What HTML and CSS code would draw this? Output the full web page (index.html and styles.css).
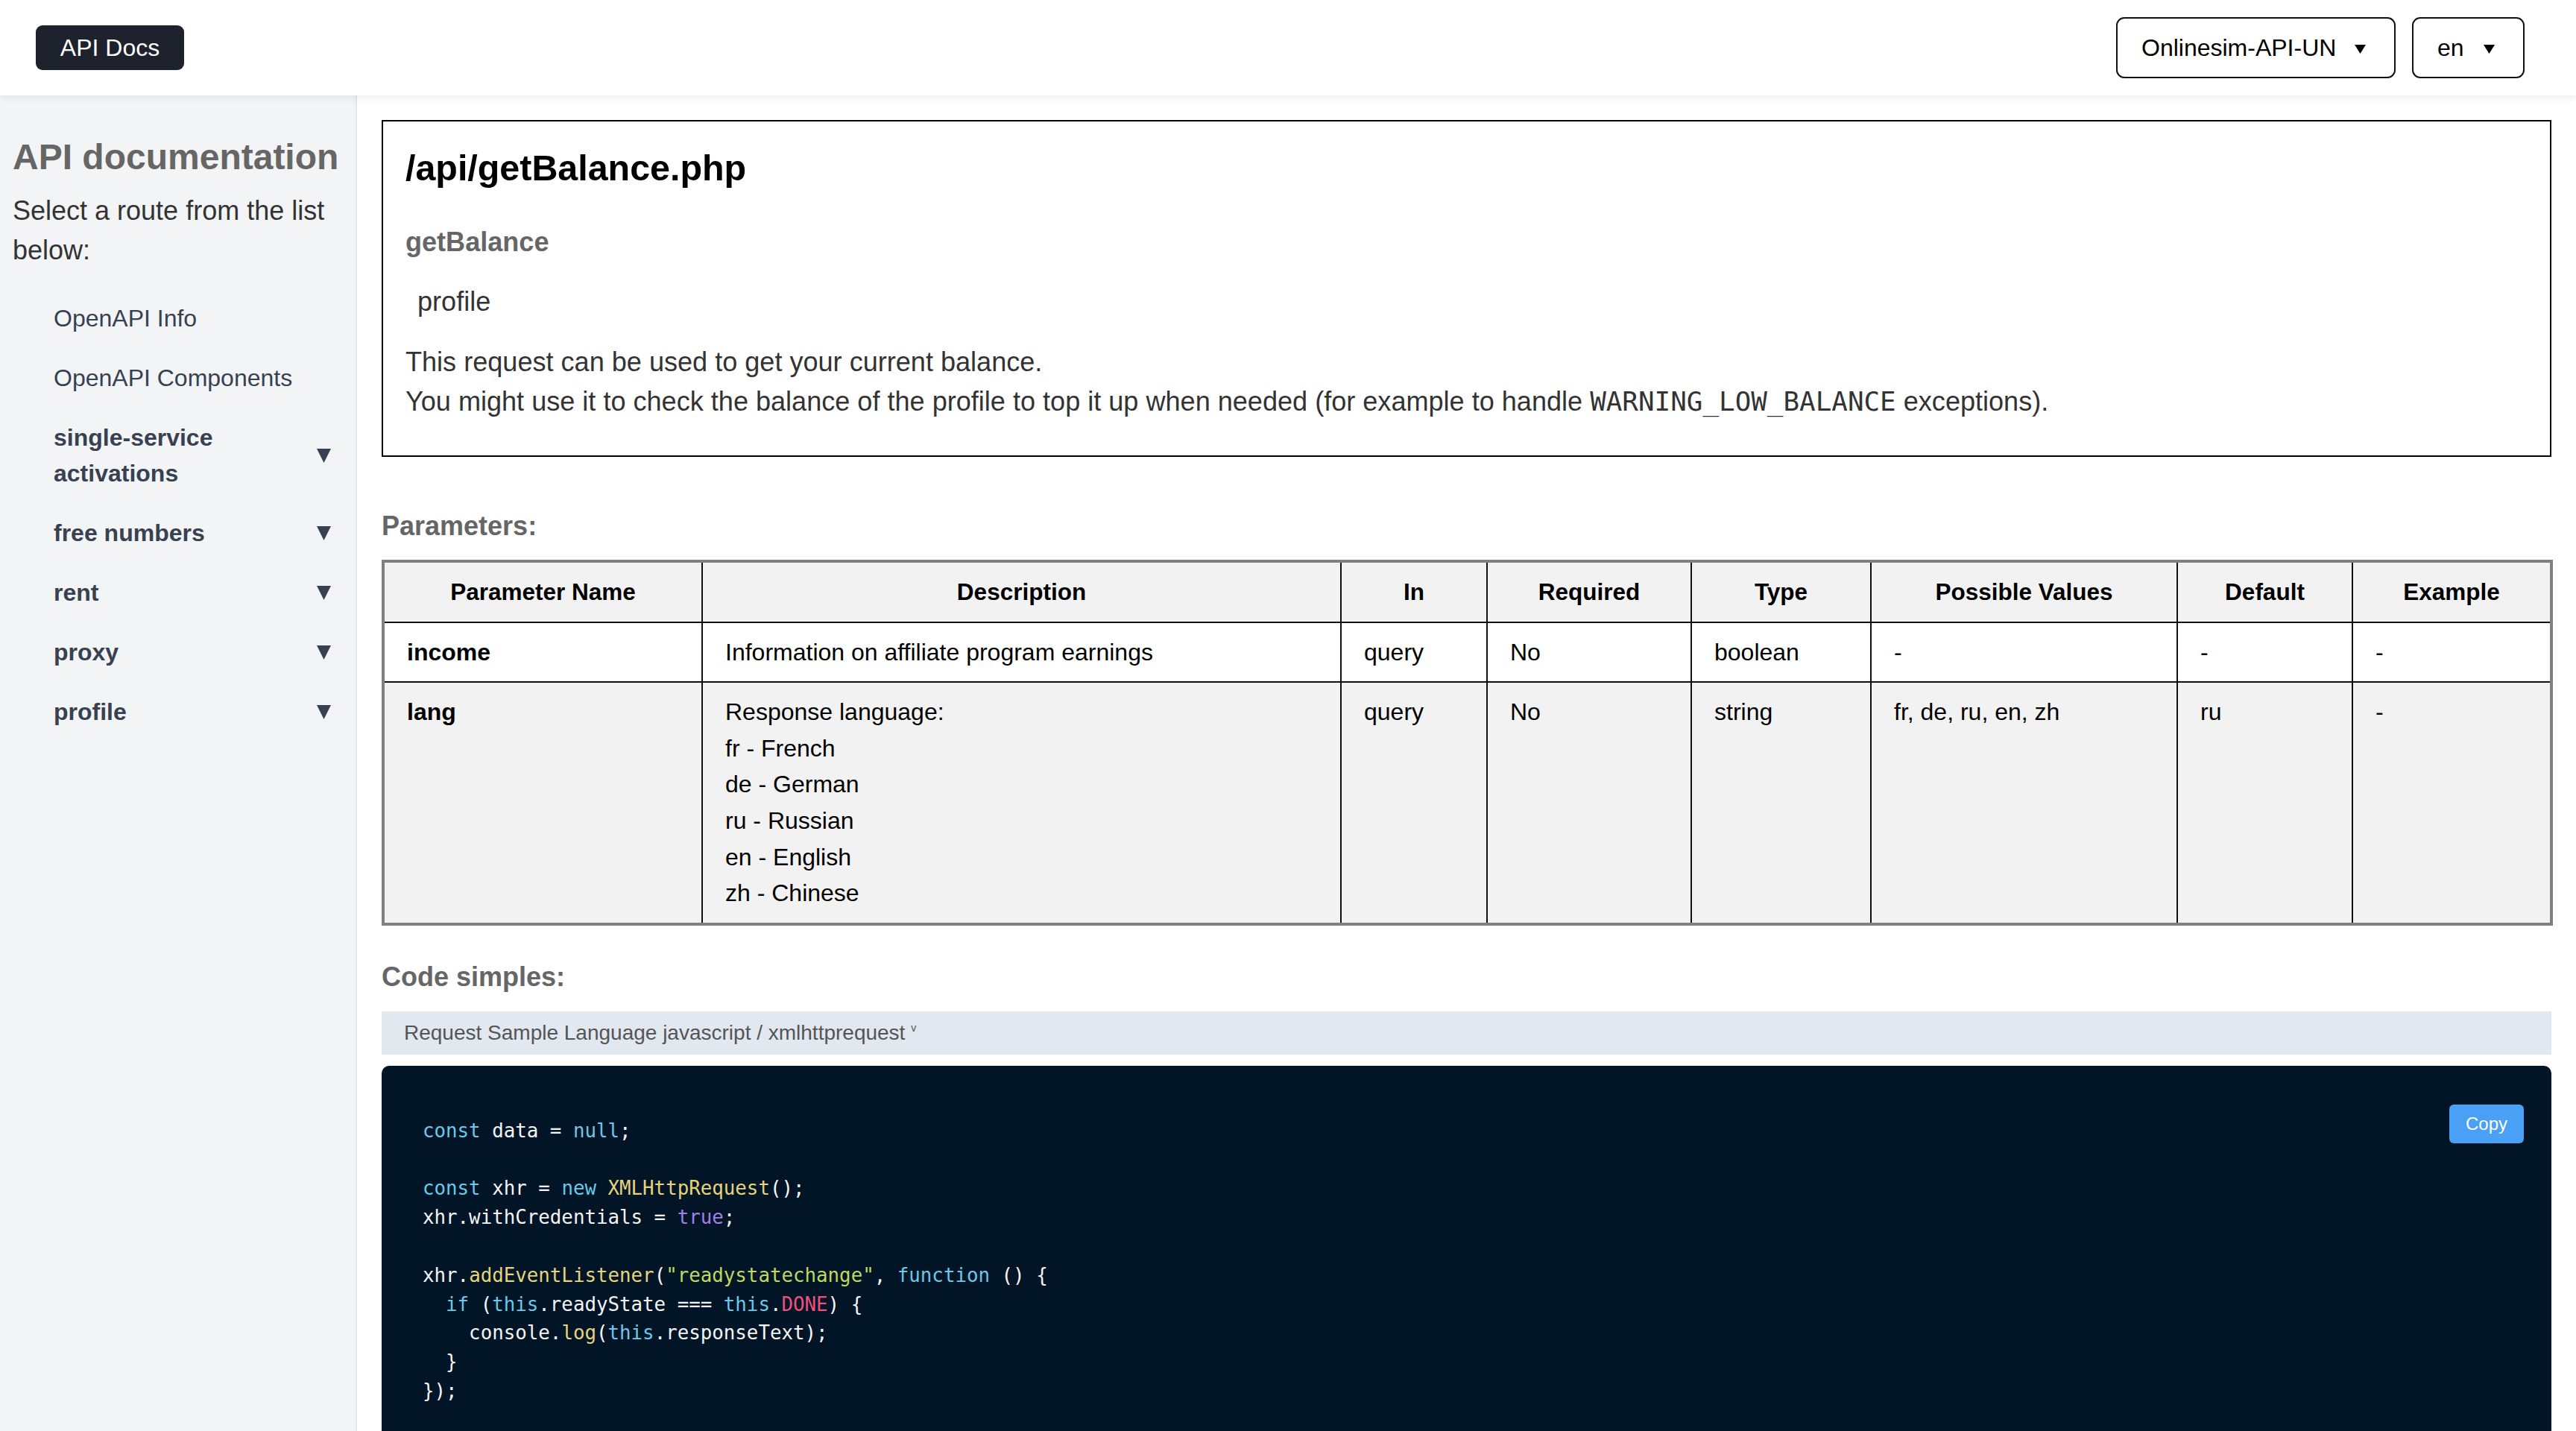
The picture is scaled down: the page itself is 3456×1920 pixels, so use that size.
FILE: index.html
```html
<!DOCTYPE html>
<html lang="en">
<head>
<meta charset="utf-8">
<title>API Docs</title>
<link rel="stylesheet" href="styles.css">
</head>
<body>
<header class="topbar">
  <div class="brand">API Docs</div>
  <div class="selects">
    <div class="select select-api"><span>Onlinesim-API-UN</span><svg class="caret" width="15" height="12" viewBox="0 0 15 12"><polygon points="0,0 15,0 7.5,12"/></svg></div>
    <div class="select select-lang"><span>en</span><svg class="caret" width="15" height="12" viewBox="0 0 15 12"><polygon points="0,0 15,0 7.5,12"/></svg></div>
  </div>
</header>
<div class="layout">
  <aside class="sidebar">
    <h2 class="side-title">API documentation</h2>
    <p class="side-intro">Select a route from the list below:</p>
    <ul class="nav">
      <li class="nav-item"><span>OpenAPI Info</span></li>
      <li class="nav-item"><span>OpenAPI Components</span></li>
      <li class="nav-item group"><span>single-service activations</span><svg class="nav-caret" width="19" height="19" viewBox="0 0 19 19"><polygon points="0,0 19,0 9.5,19"/></svg></li>
      <li class="nav-item group"><span>free numbers</span><svg class="nav-caret" width="19" height="19" viewBox="0 0 19 19"><polygon points="0,0 19,0 9.5,19"/></svg></li>
      <li class="nav-item group"><span>rent</span><svg class="nav-caret" width="19" height="19" viewBox="0 0 19 19"><polygon points="0,0 19,0 9.5,19"/></svg></li>
      <li class="nav-item group"><span>proxy</span><svg class="nav-caret" width="19" height="19" viewBox="0 0 19 19"><polygon points="0,0 19,0 9.5,19"/></svg></li>
      <li class="nav-item group"><span>profile</span><svg class="nav-caret" width="19" height="19" viewBox="0 0 19 19"><polygon points="0,0 19,0 9.5,19"/></svg></li>
    </ul>
  </aside>
  <main class="content">
    <section class="route-card">
      <h2 class="route">/api/getBalance.php</h2>
      <h4 class="op-id">getBalance</h4>
      <div class="tag">profile</div>
      <p class="desc">This request can be used to get your current balance.<br>You might use it to check the balance of the profile to top it up when needed (for example to handle <code class="inline">WARNING_LOW_BALANCE</code> exceptions).</p>
    </section>

    <h3 class="section-title">Parameters:</h3>
    <table class="params">
      <colgroup>
        <col class="c-name"><col class="c-desc"><col class="c-in"><col class="c-req"><col class="c-type"><col class="c-values"><col class="c-default"><col class="c-example">
      </colgroup>
      <thead>
        <tr><th>Parameter Name</th><th>Description</th><th>In</th><th>Required</th><th>Type</th><th>Possible Values</th><th>Default</th><th>Example</th></tr>
      </thead>
      <tbody>
        <tr><td class="pname">income</td><td>Information on affiliate program earnings</td><td>query</td><td>No</td><td>boolean</td><td>-</td><td>-</td><td>-</td></tr>
        <tr><td class="pname">lang</td><td>Response language:<br>fr - French<br>de - German<br>ru - Russian<br>en - English<br>zh - Chinese</td><td>query</td><td>No</td><td>string</td><td>fr, de, ru, en, zh</td><td>ru</td><td>-</td></tr>
      </tbody>
    </table>

    <h3 class="section-title code-title">Code simples:</h3>
    <div class="sample-bar">Request Sample Language javascript / xmlhttprequest <span class="chev">v</span></div>
    <div class="code-block">
      <button class="copy">Copy</button>
<pre class="code"><code><span class="kw">const</span> data = <span class="kw">null</span>;

<span class="kw">const</span> xhr = <span class="kw">new</span> <span class="fn">XMLHttpRequest</span>();
xhr.withCredentials = <span class="bool">true</span>;

xhr.<span class="fn">addEventListener</span>(<span class="str">"readystatechange"</span>, <span class="kw">function</span> () {
  <span class="kw">if</span> (<span class="kw">this</span>.readyState === <span class="kw">this</span>.<span class="cst">DONE</span>) {
    console.<span class="fn">log</span>(<span class="kw">this</span>.responseText);
  }
});</code></pre>
    </div>
  </main>
</div>
</body>
</html>
```
FILE: styles.css
```css
html, body {
  height: 100%;
}
body {
  margin: 0;
  overflow: hidden;
  background: #ffffff;
  font-family: "Liberation Sans", Arial, Helvetica, sans-serif;
  color: #333333;
}

/* Header */
.topbar {
  position: relative;
  z-index: 2;
  height: 128px;
  box-sizing: border-box;
  padding: 0 69px 0 48px;
  display: flex;
  align-items: center;
  justify-content: space-between;
  background: #ffffff;
  box-shadow: 0 3px 10px rgba(0, 0, 0, 0.08);
}
.brand {
  width: 199px;
  height: 60px;
  display: flex;
  align-items: center;
  justify-content: center;
  background: #1e222c;
  color: #ffffff;
  border-radius: 9px;
  font-size: 32px;
}
.selects {
  display: flex;
  gap: 22px;
}
.select {
  height: 82px;
  box-sizing: border-box;
  border: 2px solid #111111;
  border-radius: 11px;
  display: flex;
  align-items: center;
  justify-content: space-between;
  padding: 0 38px 0 32px;
  font-size: 32px;
  color: #000000;
}
.select-api { width: 375px; }
.select-lang { width: 151px; }
.caret { display: block; fill: #000000; margin-top: 3px; }

/* Layout */
.layout {
  display: flex;
  height: calc(100% - 128px);
}
.sidebar {
  width: 479px;
  flex-shrink: 0;
  box-sizing: border-box;
  padding: 54px 17px 0 17px;
  background: #f3f4f6;
  border-right: 2px solid #e5e7eb;
}
.side-title {
  margin: 0;
  font-size: 48px;
  line-height: 58px;
  font-weight: 700;
  color: #666666;
  white-space: nowrap;
}
.side-intro {
  margin: 16px 0 0;
  font-size: 36px;
  line-height: 53px;
  color: #333333;
}
.nav {
  list-style: none;
  margin: 25px 0 0;
  padding: 0 0 0 55px;
}
.nav-item {
  display: flex;
  align-items: center;
  justify-content: space-between;
  gap: 20px;
  padding: 16px 16px 16px 0;
  font-size: 32px;
  line-height: 48px;
  color: #374151;
}
.nav-item.group { font-weight: 700; }
.nav-caret { display: block; flex-shrink: 0; fill: #374151; }

/* Main */
.content {
  flex: 1;
  min-width: 0;
  padding: 33px 33px 0 33px;
  overflow: hidden;
}
.route-card {
  border: 2px solid #000000;
  padding: 34px 30px 46px 30px;
}
.route {
  margin: 0;
  font-size: 48.4px;
  line-height: 56px;
  font-weight: 700;
  color: #000000;
}
.op-id {
  margin: 45px 0 0;
  font-size: 36.1px;
  line-height: 53px;
  font-weight: 700;
  color: #666666;
}
.tag {
  margin-top: 27px;
  padding-left: 16px;
  font-size: 36.1px;
  line-height: 53px;
  color: #333333;
}
.desc {
  margin: 28px 0 0;
  font-size: 36.1px;
  line-height: 53px;
  color: #333333;
}
.inline {
  font-family: "DejaVu Sans Mono", "Liberation Mono", monospace;
  font-size: 35.9px;
}
.section-title {
  margin: 66px 0 0;
  font-size: 36px;
  line-height: 53px;
  font-weight: 700;
  color: #666666;
}
.section-title.code-title { margin-top: 42px; }

/* Table */
.params {
  margin-top: 19px;
  width: 100%;
  table-layout: fixed;
  border-collapse: collapse;
  border: 4px solid #808080;
}
.c-name { width: 428px; }
.c-desc { width: 857px; }
.c-in { width: 196px; }
.c-req { width: 274px; }
.c-type { width: 241px; }
.c-values { width: 411px; }
.c-default { width: 235px; }
.c-example { width: 267px; }
.params th,
.params td {
  border: 2px solid #111111;
  padding: 15px 30px;
  font-size: 32px;
  line-height: 48.6px;
  text-align: left;
  vertical-align: top;
  color: #000000;
}
.params th {
  font-size: 31.5px;
  font-weight: 700;
  text-align: center;
}
.params thead tr { background: #f2f2f2; }
.params tbody tr:nth-child(even) { background: #f2f2f2; }
.params td.pname { font-weight: 700; }

/* Code samples */
.sample-bar {
  margin-top: 20px;
  height: 58px;
  box-sizing: border-box;
  padding: 0 30px;
  display: flex;
  align-items: center;
  background: #e2e8f0;
  color: #555555;
  font-size: 28px;
  white-space: pre;
}
.chev {
  font-size: 14px;
  align-self: flex-start;
  margin-top: 14px;
}
.code-block {
  position: relative;
  margin-top: 15px;
  background: #021527;
  border-radius: 10px 10px 0 0;
  padding: 68px 55px 60px 55px;
}
.copy {
  position: absolute;
  top: 52px;
  right: 37px;
  width: 100px;
  height: 52px;
  border: none;
  border-radius: 6px;
  background: #4aa0f4;
  color: #ffffff;
  font-family: "Liberation Sans", Arial, sans-serif;
  font-size: 24px;
  padding: 0;
}
.code {
  margin: 0;
  font-family: "DejaVu Sans Mono", "Liberation Mono", monospace;
  font-size: 25.8px;
  line-height: 38.8px;
  color: #f4f4f4;
}
.kw { color: #6bc8e8; }
.fn { color: #e4d47c; }
.str { color: #bfd860; }
.bool { color: #a07fe9; }
.cst { color: #f0507b; }
```
